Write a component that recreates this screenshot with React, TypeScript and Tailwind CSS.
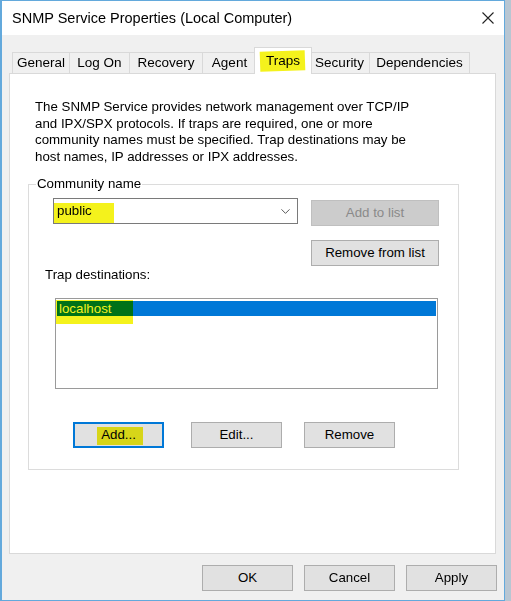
import { ChevronDown } from 'lucide-react';

const tabs = [
  { label: 'General', cls: 'w-[58px]' },
  { label: 'Log On', cls: 'w-[61px] -ml-px' },
  { label: 'Recovery', cls: 'w-[74px] -ml-px' },
  { label: 'Agent', cls: 'w-[55px] -ml-px' },
  { label: 'Traps', cls: 'w-[58px] -ml-[3px]', active: true },
  { label: 'Security', cls: 'w-[61px] -ml-[3px]' },
  { label: 'Dependencies', cls: 'w-[101px] -ml-px' },
];

function Marker({ className }: { className: string }) {
  // yellow highlighter stroke painted over the screenshot
  return <span className={`pointer-events-none absolute bg-[#f4f21c] mix-blend-multiply ${className}`} />;
}

function Btn({
  children,
  className = '',
  disabled,
  focused,
}: {
  children: React.ReactNode;
  className?: string;
  disabled?: boolean;
  focused?: boolean;
}) {
  return (
    <button
      className={`relative flex h-[26px] items-center justify-center text-[13.3px] ${
        disabled
          ? 'border border-[#bfbfbf] bg-[#cccccc] text-[#8a8a8a]'
          : focused
            ? 'border-2 border-[#0078d7] bg-[#e1e1e1] text-black'
            : 'border border-[#adadad] bg-[#e1e1e1] text-black'
      } ${className}`}
    >
      {children}
    </button>
  );
}

export default function App() {
  return (
    <div className="flex h-[601px] w-[511px] bg-[#b8c6d2] font-['Liberation_Sans',Arial,sans-serif] text-black">
      <div className="flex h-[601px] w-[505px] flex-col border-y border-r border-l-2 border-[#63a9dc] bg-[#f0f0f0]">
        {/* Title bar */}
        <div className="flex h-[34px] shrink-0 items-center justify-between bg-white pl-[10px] pr-[10px]">
          <span className="text-[14.5px] leading-none">SNMP Service Properties (Local Computer)</span>
          <svg width="12" height="12" viewBox="0 0 12 12">
            <path d="M0.5 0.5 L11.5 11.5 M11.5 0.5 L0.5 11.5" stroke="#222" strokeWidth="1.1" fill="none" />
          </svg>
        </div>

        {/* Body */}
        <div className="flex flex-1 flex-col pl-[7px] pr-[8px] pt-[12px]">
          {/* Tabs */}
          <div className="relative z-10 ml-[3px] flex h-[27px] items-end">
            {tabs.map((t) =>
              t.active ? (
                <div
                  key={t.label}
                  className={`relative z-10 flex h-[27px] items-start justify-center border-x border-t border-[#d9d9d9] bg-white pt-[5px] text-[13.5px] leading-4 ${t.cls}`}
                >
                  {t.label}
                  <Marker className="left-[5px] top-[3px] h-[20px] w-[45px] -rotate-2" />
                </div>
              ) : (
                <div
                  key={t.label}
                  className={`mb-px flex h-[21px] items-center justify-center border-x border-t border-[#d9d9d9] bg-[#f0f0f0] text-[13.5px] leading-4 ${t.cls}`}
                >
                  {t.label}
                </div>
              ),
            )}
          </div>

          {/* Tab panel */}
          <div className="-mt-px flex h-[481px] shrink-0 flex-col border border-[#d9d9d9] bg-white pl-[25px] pt-[25px]">
            <p className="whitespace-nowrap text-[13.3px] leading-[16.5px]">
              The SNMP Service provides network management over TCP/IP
              <br />
              and IPX/SPX protocols. If traps are required, one or more
              <br />
              community names must be specified. Trap destinations may be
              <br />
              host names, IP addresses or IPX addresses.
            </p>

            <fieldset className="-ml-[7px] mt-[11px] w-[431px] border border-[#dcdcdc] pb-[21px]">
              <legend className="ml-[7px] px-px text-[13.3px] leading-4">Community name</legend>

              <div className="flex items-start">
                <div className="relative ml-[24px] mt-[6px] flex h-[26px] w-[245px] items-center justify-between border border-[#7a7a7a] bg-white pl-[3px] pr-[4px] text-[13.3px]">
                  <span>public</span>
                  <ChevronDown size={15} strokeWidth={1.3} color="#333" />
                  <Marker className="left-0 top-[4px] h-[20px] w-[60px]" />
                </div>
                <div className="ml-[13px] mt-[8px] flex w-[128px] flex-col gap-[14px]">
                  <Btn disabled>Add to list</Btn>
                  <Btn>Remove from list</Btn>
                </div>
              </div>

              <div className="ml-[16px] mt-px text-[13.3px] leading-4">Trap destinations:</div>

              <div className="relative ml-[26px] mt-[15px] h-[91px] w-[383px] border border-[#9a9a9a] bg-white pl-px pr-px pt-[2px]">
                <div className="flex h-[15px] items-center bg-[#0078d7] pl-[2px] text-[13.3px] text-white">localhost</div>
                <Marker className="left-0 top-px h-[24px] w-[77px]" />
              </div>

              <div className="mt-[33px] flex">
                <Btn focused className="ml-[44px] w-[91px]">
                  Add...
                  <Marker className="left-[22px] top-[3px] h-[18px] w-[46px]" />
                </Btn>
                <Btn className="ml-[27px] w-[91px]">Edit...</Btn>
                <Btn className="ml-[22px] w-[91px]">Remove</Btn>
              </div>
            </fieldset>
          </div>

          {/* Footer */}
          <div className="mr-[-1px] mt-[11px] flex justify-end gap-[11px]">
            <Btn className="w-[91px]">OK</Btn>
            <Btn className="w-[91px]">Cancel</Btn>
            <Btn className="w-[91px]">Apply</Btn>
          </div>
        </div>
      </div>
    </div>
  );
}
